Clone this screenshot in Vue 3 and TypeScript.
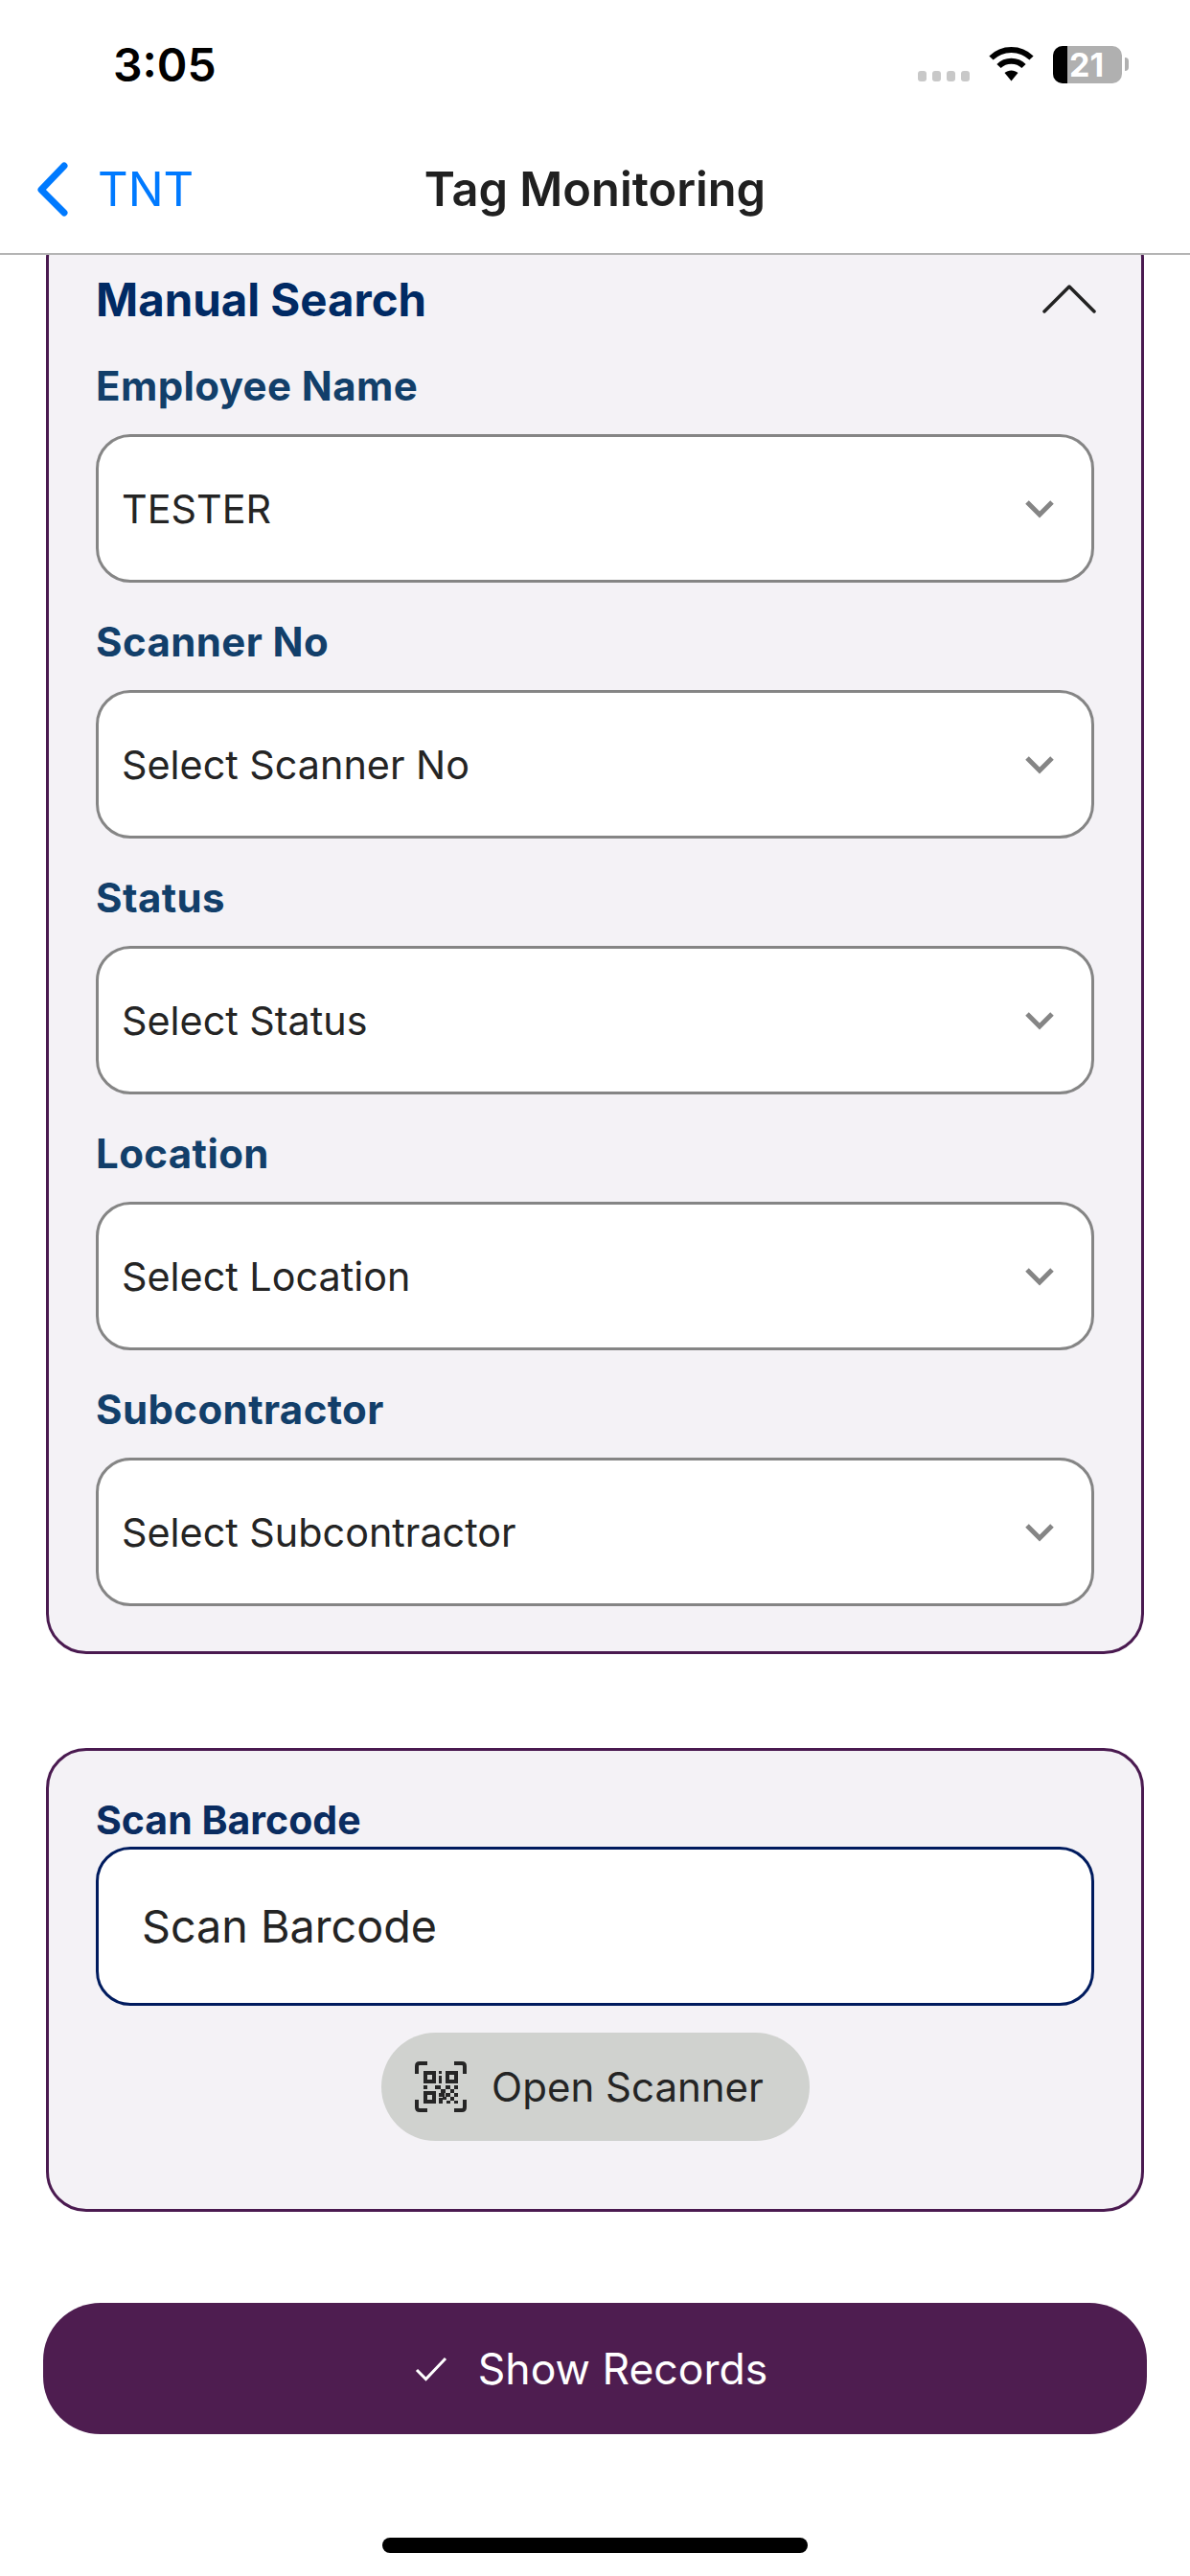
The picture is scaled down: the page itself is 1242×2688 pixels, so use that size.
<script setup lang="ts">
const fields = [
  { label: "Employee Name", value: "TESTER" },
  { label: "Scanner No", value: "Select Scanner No" },
  { label: "Status", value: "Select Status" },
  { label: "Location", value: "Select Location" },
  { label: "Subcontractor", value: "Select Subcontractor" },
];

// qr modules of the scanner icon: x, y, w, h
const modules = [
  [25, 10, 3, 3], [25, 15, 3, 8],
  [9, 25, 4, 4], [21, 25, 6, 4], [32, 25, 5, 4], [41, 25, 4, 4],
  [27, 29, 5, 4], [37, 29, 4, 4],
  [25, 33, 6, 4], [32, 33, 5, 4], [41, 33, 4, 4],
  [25, 38, 4, 6], [29, 37, 4, 3], [37, 37, 4, 4],
  [33, 41, 4, 3], [41, 41, 4, 3],
];
</script>

<template>
  <div class="page">
    <div class="statusBar">
      <span class="time">3:05</span>
      <div class="statusIcons">
        <div class="signal"><i></i><i></i><i></i><i></i></div>
        <svg class="wifi" viewBox="0 0 47 37" width="47" height="37">
          <path d="M2.5 12.5 C14 1 33 1 44.5 12.5" fill="none" stroke="#000" stroke-width="6" stroke-linejoin="round" />
          <path d="M10.5 21 C17.5 14 29.5 14 36.5 21" fill="none" stroke="#000" stroke-width="6" />
          <path d="M16.5 28 C20.5 24.5 26.5 24.5 30.5 28 L23.5 36.5 Z" fill="#000" />
        </svg>
        <div class="battery">
          <div class="batteryFill"></div>
          <span class="batteryText">21</span>
        </div>
        <div class="batteryTip"></div>
      </div>
    </div>

    <div class="nav">
      <div class="back">
        <svg class="backIcon" viewBox="0 0 36 60" width="36" height="60">
          <path d="M30 5 L6 30 L30 54" fill="none" stroke="#007aff" stroke-width="7" stroke-linecap="round" stroke-linejoin="round" />
        </svg>
        <span class="backText">TNT</span>
      </div>
      <div class="navTitle">Tag Monitoring</div>
      <div></div>
    </div>

    <div class="content">
      <div class="card searchCard">
        <div class="cardHead">
          <span class="cardTitle">Manual Search</span>
          <svg class="collapse" viewBox="0 0 56 30" width="56" height="30">
            <path d="M2 28 L28 2 L54 28" fill="none" stroke="#222" stroke-width="3.5" stroke-linecap="round" stroke-linejoin="round" />
          </svg>
        </div>
        <div class="fields">
          <div v-for="f in fields" :key="f.label" class="field">
            <div class="label">{{ f.label }}</div>
            <div class="select">
              <span>{{ f.value }}</span>
              <svg viewBox="0 0 32 20" width="32" height="20">
                <path d="M3 3 L16 16 L29 3" fill="none" stroke="#858585" stroke-width="5" />
              </svg>
            </div>
          </div>
        </div>
      </div>

      <div class="card scanCard">
        <div class="scanLabel">Scan Barcode</div>
        <div class="scanInput">Scan Barcode</div>
        <button class="scanBtn">
          <svg viewBox="0 0 54 53" width="54" height="53">
            <g fill="none" stroke="#262626" stroke-width="4">
              <path d="M2 13 V5 Q2 2 5 2 H13" />
              <path d="M41 2 H49 Q52 2 52 5 V13" />
              <path d="M2 40 V48 Q2 51 5 51 H13" />
              <path d="M52 40 V48 Q52 51 49 51 H41" />
              <rect x="11" y="12" width="9" height="9" />
              <rect x="34" y="12" width="9" height="9" />
              <rect x="11" y="33" width="9" height="9" />
            </g>
            <rect v-for="(m, i) in modules" :key="i" :x="m[0]" :y="m[1]" :width="m[2]" :height="m[3]" fill="#262626" />
          </svg>
          <span>Open Scanner</span>
        </button>
      </div>

      <button class="showBtn">
        <svg viewBox="0 0 34 26" width="34" height="26">
          <path d="M2 14 L11.5 23.5 L32 2" fill="none" stroke="#fff" stroke-width="3" />
        </svg>
        <span>Show Records</span>
      </button>
    </div>

    <div class="homeBar"></div>
  </div>
</template>

<style>
html, body {
  margin: 0;
  background: #fff;
}
</style>

<style scoped>
.page {
  width: 1242px;
  height: 2688px;
  display: flex;
  flex-direction: column;
  overflow: hidden;
  background: #fff;
  font-family: Inter, "Liberation Sans", sans-serif;
  color: #242424;
}
.statusBar {
  height: 132px;
  box-sizing: border-box;
  padding: 39px 64px 0 118px;
  display: flex;
  justify-content: space-between;
  align-items: flex-start;
}
.time {
  font-size: 48px;
  line-height: 58px;
  font-weight: 600;
  color: #000;
}
.statusIcons {
  display: flex;
  align-items: flex-start;
  padding-top: 9px;
}
.signal {
  display: flex;
  gap: 6px;
  margin-top: 26px;
  margin-right: 20px;
}
.signal i {
  width: 9px;
  height: 11px;
  border-radius: 3px;
  background: #c8c8c8;
}
.wifi {
  margin-right: 20px;
}
.battery {
  position: relative;
  width: 72px;
  height: 39px;
  border-radius: 10px;
  background: #b0b0b0;
}
.batteryFill {
  width: 15px;
  height: 100%;
  border-radius: 10px 0 0 10px;
  background: #000;
}
.batteryText {
  position: absolute;
  top: 0;
  left: 17px;
  font-size: 34px;
  line-height: 39px;
  font-weight: 700;
  color: #fff;
}
.batteryTip {
  width: 4px;
  height: 14px;
  margin: 12px 0 0 3px;
  border-radius: 0 4px 4px 0;
  background: #b0b0b0;
}
.nav {
  height: 134px;
  box-sizing: border-box;
  border-bottom: 2px solid #b4b4b4;
  display: grid;
  grid-template-columns: 1fr auto 1fr;
  align-items: center;
}
.back {
  display: flex;
  align-items: center;
  padding-left: 37px;
  gap: 29px;
  color: #007aff;
}
.backText {
  font-size: 49px;
  line-height: 60px;
}
.navTitle {
  font-size: 48.8px;
  line-height: 60px;
  font-weight: 600;
  color: #202020;
}
.content {
  flex: 1;
  min-height: 0;
  overflow: hidden;
  padding: 0 48px;
  display: flex;
  flex-direction: column;
}
.card {
  box-sizing: border-box;
  border: 3px solid #4a1a50;
  border-radius: 42px;
  background: #f4f2f6;
}
.searchCard {
  margin-top: -38px;
  padding: 0 49px 47px;
  flex-shrink: 0;
}
.cardHead {
  height: 144px;
  box-sizing: border-box;
  padding-top: 18px;
  display: flex;
  align-items: center;
  justify-content: space-between;
}
.cardTitle {
  font-size: 47.4px;
  font-weight: 700;
  color: #002a64;
}
.collapse {
  margin-right: -2px;
}
.fields {
  display: flex;
  flex-direction: column;
  gap: 38px;
  margin-top: 4px;
}
.label {
  height: 48px;
  line-height: 48px;
  margin-bottom: 26px;
  font-size: 42px;
  letter-spacing: 0.4px;
  font-weight: 700;
  color: #123f6a;
}
.select {
  height: 155px;
  box-sizing: border-box;
  border: 3px solid #858585;
  border-radius: 36px;
  background: #fff;
  padding: 0 38px 0 24px;
  display: flex;
  align-items: center;
  justify-content: space-between;
  font-size: 41.3px;
  color: #242424;
}
.scanCard {
  margin-top: 98px;
  height: 484px;
  flex-shrink: 0;
  padding: 50px 49px 0;
  display: flex;
  flex-direction: column;
  align-items: stretch;
}
.scanLabel {
  height: 50px;
  line-height: 44px;
  font-size: 41px;
  font-weight: 700;
  color: #0a2c60;
}
.scanInput {
  height: 166px;
  box-sizing: border-box;
  border: 3px solid #001b5e;
  border-radius: 36px;
  background: #fff;
  padding: 0 45px;
  display: flex;
  align-items: center;
  font-size: 46.7px;
}
.scanBtn {
  align-self: center;
  width: 447px;
  height: 113px;
  margin-top: 28px;
  padding: 0 12px 0 0;
  border: 0;
  border-radius: 57px;
  background: #d0d2cf;
  display: flex;
  align-items: center;
  justify-content: center;
  gap: 26px;
  font: inherit;
  font-size: 42px;
  color: #242424;
}
.showBtn {
  margin: 95px -3px 0;
  height: 137px;
  padding: 0 8px 0 0;
  flex-shrink: 0;
  border: 0;
  border-radius: 60px;
  background: #4e1d50;
  display: flex;
  align-items: center;
  justify-content: center;
  gap: 32px;
  font: inherit;
  font-size: 44.5px;
  color: #fff;
}
.homeBar {
  align-self: center;
  width: 444px;
  height: 16px;
  margin-bottom: 24px;
  border-radius: 8px;
  background: #000;
}
</style>
